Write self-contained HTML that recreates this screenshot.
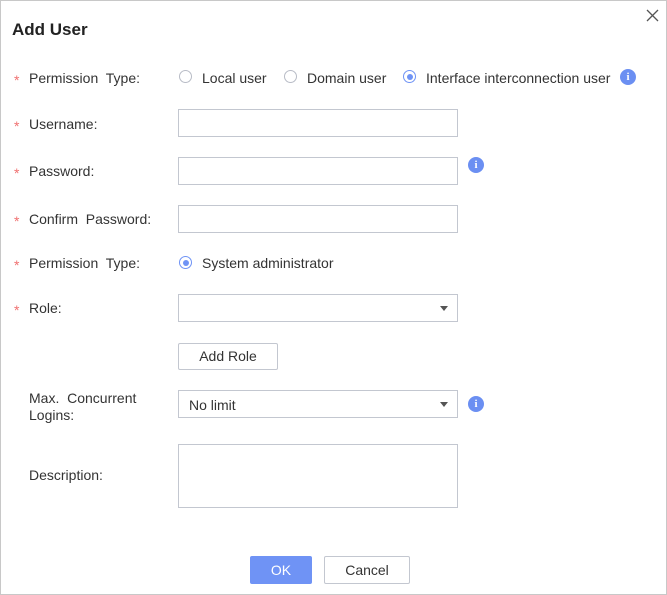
<!DOCTYPE html><html><head><style>
body{margin:0;width:667px;height:595px;background:#fff;font-family:"Liberation Sans",sans-serif;font-size:14px;color:#333;position:relative;overflow:hidden}
.f{position:absolute;left:0;top:0;width:665px;height:593px;border:1px solid #c8c8c8}
.a{position:absolute;white-space:nowrap}
.st{color:#f07070;font-size:14px}
.in{position:absolute;left:178px;width:278px;height:26px;border:1px solid #c3c7d0;background:#fff}
.r{position:absolute;width:13px;height:13px;border:1px solid #b8bcc6;border-radius:50%;box-sizing:border-box}
.r.on{border-color:#6f93f5}
.r.on:after{content:"";position:absolute;left:2.5px;top:2.5px;width:6px;height:6px;border-radius:50%;background:#6f93f5}
.i{position:absolute;width:16px;height:16px;border-radius:50%;background:#6b8ff2;color:#fff;font-size:11px;font-weight:bold;text-align:center;line-height:16px;font-family:"Liberation Serif",serif}
.tri{position:absolute;right:9px;top:11px;border-left:4px solid transparent;border-right:4px solid transparent;border-top:5px solid #555}
</style></head><body><div class="f"></div>
<div class="a" style="left:12px;top:20px;font-size:17px;font-weight:bold;color:#222">Add User</div>
<svg class="a" style="left:646px;top:9px" width="13" height="13"><path d="M1 1L12 12M12 1L1 12" stroke="#555" stroke-width="1.3"/></svg>

<div class="a st" style="left:14px;top:72px">*</div><div class="a" style="left:29px;top:70px">Permission&nbsp; Type:</div>
<div class="r" style="left:179px;top:70px"></div><div class="a" style="left:202px;top:70px">Local user</div>
<div class="r" style="left:284px;top:70px"></div><div class="a" style="left:307px;top:70px">Domain user</div>
<div class="r on" style="left:403px;top:70px"></div><div class="a" style="left:426px;top:70px">Interface interconnection user</div>
<div class="i" style="left:620px;top:69px">i</div>

<div class="a st" style="left:14px;top:118px">*</div><div class="a" style="left:29px;top:116px">Username:</div>
<div class="in" style="top:109px"></div>
<div class="a st" style="left:14px;top:165px">*</div><div class="a" style="left:29px;top:163px">Password:</div>
<div class="in" style="top:157px"></div><div class="i" style="left:468px;top:157px">i</div>
<div class="a st" style="left:14px;top:213px">*</div><div class="a" style="left:29px;top:211px">Confirm&nbsp; Password:</div>
<div class="in" style="top:205px"></div>
<div class="a st" style="left:14px;top:257px">*</div><div class="a" style="left:29px;top:255px">Permission&nbsp; Type:</div>
<div class="r on" style="left:179px;top:256px"></div><div class="a" style="left:202px;top:255px">System administrator</div>
<div class="a st" style="left:14px;top:302px">*</div><div class="a" style="left:29px;top:300px">Role:</div>
<div class="in" style="top:294px"><div class="tri"></div></div>
<div class="a" style="left:178px;top:343px;width:98px;height:25px;border:1px solid #c3c7d0;border-radius:2px;text-align:center;line-height:25px">Add Role</div>
<div class="a" style="left:29px;top:390px;line-height:17px">Max.&nbsp; Concurrent<br>Logins:</div>
<div class="in" style="top:390px"><div class="a" style="left:10px;top:6px">No limit</div><div class="tri"></div></div>
<div class="i" style="left:468px;top:396px">i</div>
<div class="a" style="left:29px;top:467px">Description:</div>
<div class="in" style="top:444px;height:62px"></div>
<div class="a" style="left:250px;top:556px;width:62px;height:28px;background:#6f93f5;border-radius:2px;color:#fff;text-align:center;line-height:28px">OK</div>
<div class="a" style="left:324px;top:556px;width:84px;height:26px;border:1px solid #c3c7d0;border-radius:2px;text-align:center;line-height:26px">Cancel</div>
</body></html>
